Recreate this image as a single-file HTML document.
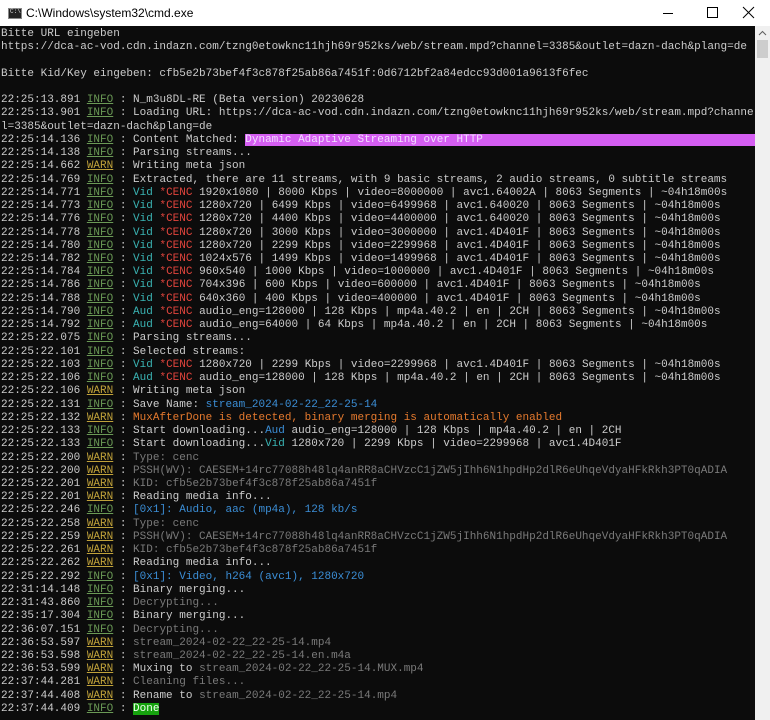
<!DOCTYPE html>
<html><head><meta charset="utf-8"><style>
html,body{margin:0;padding:0;width:770px;height:720px;overflow:hidden;background:#fff}
#title{position:absolute;left:0;top:0;width:770px;height:26px;background:#fff;font-family:"Liberation Sans",sans-serif;font-size:12px;color:#000}
#title .t{position:absolute;left:26px;top:6px}
#icon{position:absolute;left:8px;top:8px;width:12px;height:9px;background:#222;border:1px solid #888}
#icon:after{content:"C:\\";position:absolute;left:1px;top:-1px;font-size:6px;color:#ddd;font-family:"Liberation Mono",monospace}
.ctl{position:absolute;top:0;width:44px;height:26px}
#con{position:absolute;left:0;top:26px;width:755px;height:694px;background:#0c0c0c;overflow:hidden}
pre{margin:0;padding:2px 0 0 1px;font-family:"Liberation Mono",monospace;font-size:11px;line-height:13.235px;color:#cccccc;white-space:pre}
#sb{position:absolute;left:755px;top:26px;width:15px;height:694px;background:#f0f0f0}
#thumb{position:absolute;left:2px;top:14px;width:11px;height:18px;background:#cdcdcd}
.i{color:#6a9955;text-decoration:underline}
.w{color:#c0a23a;text-decoration:underline}
.v{color:#3ab4b4}
.c{color:#e0443c}
.b{color:#3b8ed6}
.g{color:#7a7a7a}
.o{color:#e67a2e}
.m{background:#d55ef2;color:#f3e0ff}
.d{background:#16a20e;color:#f0fff0}
</style></head><body>
<div id="title"><div id="icon"></div><span class="t">C:\Windows\system32\cmd.exe</span>
<svg class="ctl" style="left:646px" viewBox="0 0 44 26"><path d="M17 13.5h10" stroke="#000" stroke-width="1"/></svg>
<svg class="ctl" style="left:690px" viewBox="0 0 44 26"><rect x="17.5" y="7.5" width="10" height="10" fill="none" stroke="#000"/></svg>
<svg class="ctl" style="left:726px" viewBox="0 0 44 26"><path d="M17 7l11 11M28 7L17 18" stroke="#000"/></svg>
</div>
<div id="con"><pre>Bitte URL eingeben
https://dca-ac-vod.cdn.indazn.com/tzng0etowknc11hjh69r952ks/web/stream.mpd?channel=3385&amp;outlet=dazn-dach&amp;plang=de

Bitte Kid/Key eingeben: cfb5e2b73bef4f3c878f25ab86a7451f:0d6712bf2a84edcc93d001a9613f6fec

22:25:13.891 <span class="i">INFO</span> : N_m3u8DL-RE (Beta version) 20230628
22:25:13.901 <span class="i">INFO</span> : Loading URL: https://dca-ac-vod.cdn.indazn.com/tzng0etowknc11hjh69r952ks/web/stream.mpd?channe
l=3385&amp;outlet=dazn-dach&amp;plang=de
22:25:14.136 <span class="i">INFO</span> : Content Matched: <span class="m">Dynamic Adaptive Streaming over HTTP                                          </span>
22:25:14.138 <span class="i">INFO</span> : Parsing streams...
22:25:14.662 <span class="w">WARN</span> : Writing meta json
22:25:14.769 <span class="i">INFO</span> : Extracted, there are 11 streams, with 9 basic streams, 2 audio streams, 0 subtitle streams
22:25:14.771 <span class="i">INFO</span> : <span class="v">Vid</span> <span class="c">*CENC</span> 1920x1080 | 8000 Kbps | video=8000000 | avc1.64002A | 8063 Segments | ~04h18m00s
22:25:14.773 <span class="i">INFO</span> : <span class="v">Vid</span> <span class="c">*CENC</span> 1280x720 | 6499 Kbps | video=6499968 | avc1.640020 | 8063 Segments | ~04h18m00s
22:25:14.776 <span class="i">INFO</span> : <span class="v">Vid</span> <span class="c">*CENC</span> 1280x720 | 4400 Kbps | video=4400000 | avc1.640020 | 8063 Segments | ~04h18m00s
22:25:14.778 <span class="i">INFO</span> : <span class="v">Vid</span> <span class="c">*CENC</span> 1280x720 | 3000 Kbps | video=3000000 | avc1.4D401F | 8063 Segments | ~04h18m00s
22:25:14.780 <span class="i">INFO</span> : <span class="v">Vid</span> <span class="c">*CENC</span> 1280x720 | 2299 Kbps | video=2299968 | avc1.4D401F | 8063 Segments | ~04h18m00s
22:25:14.782 <span class="i">INFO</span> : <span class="v">Vid</span> <span class="c">*CENC</span> 1024x576 | 1499 Kbps | video=1499968 | avc1.4D401F | 8063 Segments | ~04h18m00s
22:25:14.784 <span class="i">INFO</span> : <span class="v">Vid</span> <span class="c">*CENC</span> 960x540 | 1000 Kbps | video=1000000 | avc1.4D401F | 8063 Segments | ~04h18m00s
22:25:14.786 <span class="i">INFO</span> : <span class="v">Vid</span> <span class="c">*CENC</span> 704x396 | 600 Kbps | video=600000 | avc1.4D401F | 8063 Segments | ~04h18m00s
22:25:14.788 <span class="i">INFO</span> : <span class="v">Vid</span> <span class="c">*CENC</span> 640x360 | 400 Kbps | video=400000 | avc1.4D401F | 8063 Segments | ~04h18m00s
22:25:14.790 <span class="i">INFO</span> : <span class="v">Aud</span> <span class="c">*CENC</span> audio_eng=128000 | 128 Kbps | mp4a.40.2 | en | 2CH | 8063 Segments | ~04h18m00s
22:25:14.792 <span class="i">INFO</span> : <span class="v">Aud</span> <span class="c">*CENC</span> audio_eng=64000 | 64 Kbps | mp4a.40.2 | en | 2CH | 8063 Segments | ~04h18m00s
22:25:22.075 <span class="i">INFO</span> : Parsing streams...
22:25:22.101 <span class="i">INFO</span> : Selected streams:
22:25:22.103 <span class="i">INFO</span> : <span class="v">Vid</span> <span class="c">*CENC</span> 1280x720 | 2299 Kbps | video=2299968 | avc1.4D401F | 8063 Segments | ~04h18m00s
22:25:22.106 <span class="i">INFO</span> : <span class="v">Aud</span> <span class="c">*CENC</span> audio_eng=128000 | 128 Kbps | mp4a.40.2 | en | 2CH | 8063 Segments | ~04h18m00s
22:25:22.106 <span class="w">WARN</span> : Writing meta json
22:25:22.131 <span class="i">INFO</span> : Save Name: <span class="b">stream_2024-02-22_22-25-14</span>
22:25:22.132 <span class="w">WARN</span> : <span class="o">MuxAfterDone is detected, binary merging is automatically enabled</span>
22:25:22.133 <span class="i">INFO</span> : Start downloading...<span class="b">Aud</span> audio_eng=128000 | 128 Kbps | mp4a.40.2 | en | 2CH
22:25:22.133 <span class="i">INFO</span> : Start downloading...<span class="v">Vid</span> 1280x720 | 2299 Kbps | video=2299968 | avc1.4D401F
22:25:22.200 <span class="w">WARN</span> : <span class="g">Type: cenc</span>
22:25:22.200 <span class="w">WARN</span> : <span class="g">PSSH(WV): CAESEM+14rc77088h48lq4anRR8aCHVzcC1jZW5jIhh6N1hpdHp2dlR6eUhqeVdyaHFkRkh3PT0qADIA</span>
22:25:22.201 <span class="w">WARN</span> : <span class="g">KID: cfb5e2b73bef4f3c878f25ab86a7451f</span>
22:25:22.201 <span class="w">WARN</span> : Reading media info...
22:25:22.246 <span class="i">INFO</span> : <span class="b">[0x1]: Audio, aac (mp4a), 128 kb/s</span>
22:25:22.258 <span class="w">WARN</span> : <span class="g">Type: cenc</span>
22:25:22.259 <span class="w">WARN</span> : <span class="g">PSSH(WV): CAESEM+14rc77088h48lq4anRR8aCHVzcC1jZW5jIhh6N1hpdHp2dlR6eUhqeVdyaHFkRkh3PT0qADIA</span>
22:25:22.261 <span class="w">WARN</span> : <span class="g">KID: cfb5e2b73bef4f3c878f25ab86a7451f</span>
22:25:22.262 <span class="w">WARN</span> : Reading media info...
22:25:22.292 <span class="i">INFO</span> : <span class="b">[0x1]: Video, h264 (avc1), 1280x720</span>
22:31:14.148 <span class="i">INFO</span> : Binary merging...
22:31:43.860 <span class="i">INFO</span> : <span class="g">Decrypting...</span>
22:35:17.304 <span class="i">INFO</span> : Binary merging...
22:36:07.151 <span class="i">INFO</span> : <span class="g">Decrypting...</span>
22:36:53.597 <span class="w">WARN</span> : <span class="g">stream_2024-02-22_22-25-14.mp4</span>
22:36:53.598 <span class="w">WARN</span> : <span class="g">stream_2024-02-22_22-25-14.en.m4a</span>
22:36:53.599 <span class="w">WARN</span> : Muxing to <span class="g">stream_2024-02-22_22-25-14.MUX.mp4</span>
22:37:44.281 <span class="w">WARN</span> : <span class="g">Cleaning files...</span>
22:37:44.408 <span class="w">WARN</span> : Rename to <span class="g">stream_2024-02-22_22-25-14.mp4</span>
22:37:44.409 <span class="i">INFO</span> : <span class="d">Done</span></pre></div>
<div id="sb"><svg style="position:absolute;left:3px;top:4px" width="9" height="6" viewBox="0 0 9 6"><path d="M1 5l3.5-3.5L8 5" fill="none" stroke="#606060"/></svg><div id="thumb"></div></div>
</body></html>
